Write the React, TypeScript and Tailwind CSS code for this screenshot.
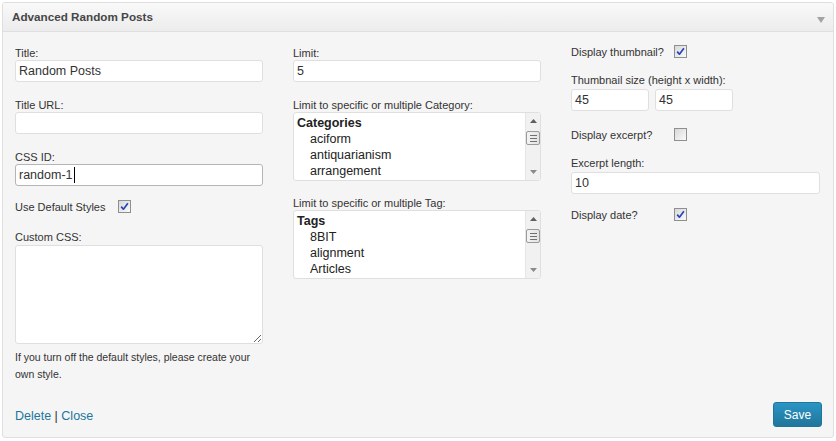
import React from "react";

function Label({ children, className }: { children?: React.ReactNode; className?: string }) {
  return <div className={"text-[11px] leading-[13px] text-[#333] whitespace-nowrap " + (className ?? "")}>{children}</div>;
}

function TextBox({ children, className, focused }: { children?: React.ReactNode; className?: string; focused?: boolean }) {
  return (
    <div
      className={
        "h-[22px] bg-white border rounded-[3px] flex items-center pl-[3px] text-[12.5px] text-[#333] " +
        (focused ? "border-[#b5b5b5] " : "border-[#dfdfdf] ") +
        (className ?? "")
      }
    >
      {children}
    </div>
  );
}

function Checkbox({ checked }: { checked?: boolean }) {
  return (
    <div className="w-[13px] h-[13px] shrink-0 border border-[#8f8f8f] bg-linear-to-br from-[#d8d8d8] to-[#fafafa] flex items-center justify-center">
      {checked && (
        <svg width="9" height="9" viewBox="0 0 9 9">
          <path d="M1.2 4.6 L3.4 7.2 L7.9 1.2" stroke="#2545b8" strokeWidth="1.7" fill="none" strokeLinejoin="round" />
        </svg>
      )}
    </div>
  );
}

function CheckRow({ label, checked, className }: { label: string; checked?: boolean; className?: string }) {
  return (
    <div className={"flex items-start h-[13px] " + (className ?? "")}>
      <span className="w-[103px] shrink-0 mt-[1px] text-[11px] leading-[13px] text-[#333] whitespace-nowrap">{label}</span>
      <Checkbox checked={checked} />
    </div>
  );
}

function ListBox({ title, items }: { title: string; items: string[] }) {
  return (
    <div className="h-[69px] bg-white border border-[#dfdfdf] rounded-[3px] flex overflow-hidden">
      <div className="flex-1 pl-[3px] pt-[2px] text-[12.5px] leading-[16px] text-[#222] overflow-hidden">
        <div className="font-bold">{title}</div>
        {items.map((it) => (
          <div key={it} className="pl-[13px] whitespace-nowrap">
            {it}
          </div>
        ))}
      </div>
      <div className="w-[15px] bg-[#f1f1f1] border-l border-[#e6e6e6] flex flex-col">
        <div className="h-[16px] flex items-center justify-center">
          <svg width="7" height="4" viewBox="0 0 7 4">
            <path d="M3.5 0 L7 4 L0 4 Z" fill="#606060" />
          </svg>
        </div>
        <div className="mt-[2px] h-[14px] border border-[#9a9a9a] rounded-[2px] bg-linear-to-r from-[#f4f4f4] to-[#e2e2e2] flex flex-col items-center justify-center gap-[2px]">
          <div className="w-[7px] h-[1px] bg-[#707070]" />
          <div className="w-[7px] h-[1px] bg-[#707070]" />
          <div className="w-[7px] h-[1px] bg-[#707070]" />
        </div>
        <div className="flex-1" />
        <div className="h-[16px] flex items-center justify-center">
          <svg width="7" height="4" viewBox="0 0 7 4">
            <path d="M0 0 L7 0 L3.5 4 Z" fill="#8a8a8a" />
          </svg>
        </div>
      </div>
    </div>
  );
}

export default function App() {
  return (
    <div className="w-[836px] h-[441px] bg-white pt-[2px] pl-[2px] font-['Liberation_Sans',Arial,sans-serif]">
      <div className="w-[832px] h-[436px] border border-[#dfdfdf] rounded-[3px] bg-[#f5f5f5] flex flex-col overflow-hidden">
        <div className="h-[29px] shrink-0 border-b border-[#dfdfdf] bg-linear-to-b from-[#f9f9f9] to-[#ececec] flex items-center justify-between pl-[9px] pr-[8px]">
          <span className="text-[11.7px] font-bold text-[#464646]">Advanced Random Posts</span>
          <svg width="8" height="6" viewBox="0 0 8 6" className="mt-[6px]">
            <path d="M0 0 L8 0 L4 6 Z" fill="#a3a3a3" />
          </svg>
        </div>

        <div className="flex pl-[12px] gap-[30px]">
          {/* left column */}
          <div className="w-[248px] flex flex-col">
            <Label className="mt-[15px]">Title:</Label>
            <TextBox>Random Posts</TextBox>
            <Label className="mt-[17px]">Title URL:</Label>
            <TextBox />
            <Label className="mt-[17px]">CSS ID:</Label>
            <TextBox focused>
              <span>random-1</span>
              <span className="w-[1px] h-[16px] bg-black ml-[1px]" />
            </TextBox>
            <CheckRow className="mt-[14px]" label="Use Default Styles" checked />
            <Label className="mt-[18px]">Custom CSS:</Label>
            <textarea
              readOnly
              className="block mt-[1px] h-[99px] w-[248px] bg-white border border-[#dfdfdf] rounded-[3px] outline-none"
            />
            <p className="mt-[5px] text-[10.5px] leading-[17px] text-[#333]">
              If you turn off the default styles, please create your own style.
            </p>
          </div>

          {/* middle column */}
          <div className="w-[248px] flex flex-col">
            <Label className="mt-[15px]">Limit:</Label>
            <TextBox>5</TextBox>
            <Label className="mt-[17px]">Limit to specific or multiple Category:</Label>
            <ListBox title="Categories" items={["aciform", "antiquarianism", "arrangement"]} />
            <Label className="mt-[16px]">Limit to specific or multiple Tag:</Label>
            <ListBox title="Tags" items={["8BIT", "alignment", "Articles"]} />
          </div>

          {/* right column */}
          <div className="w-[249px] flex flex-col">
            <CheckRow className="mt-[13px]" label="Display thumbnail?" checked />
            <Label className="mt-[16px]">Thumbnail size (height x width):</Label>
            <div className="mt-[2px] flex gap-[6px]">
              <TextBox className="w-[78px]">45</TextBox>
              <TextBox className="w-[78px]">45</TextBox>
            </div>
            <CheckRow className="mt-[17px]" label="Display excerpt?" />
            <Label className="mt-[16px]">Excerpt length:</Label>
            <TextBox className="mt-[2px]">10</TextBox>
            <CheckRow className="mt-[14px]" label="Display date?" checked />
          </div>
        </div>

        <div className="mt-auto flex items-center justify-between pl-[12px] pr-[11px] pb-[10px]">
          <span className="pt-[3px] text-[12.5px] leading-[16px] text-[#333]">
            <span className="text-[#21759b]">Delete</span> | <span className="text-[#21759b]">Close</span>
          </span>
          <div className="h-[25px] w-[49px] rounded-[3px] border border-[#21759b] bg-linear-to-b from-[#2a95c5] to-[#21759b] flex items-center justify-center text-[12px] text-white">
            Save
          </div>
        </div>
      </div>
    </div>
  );
}
